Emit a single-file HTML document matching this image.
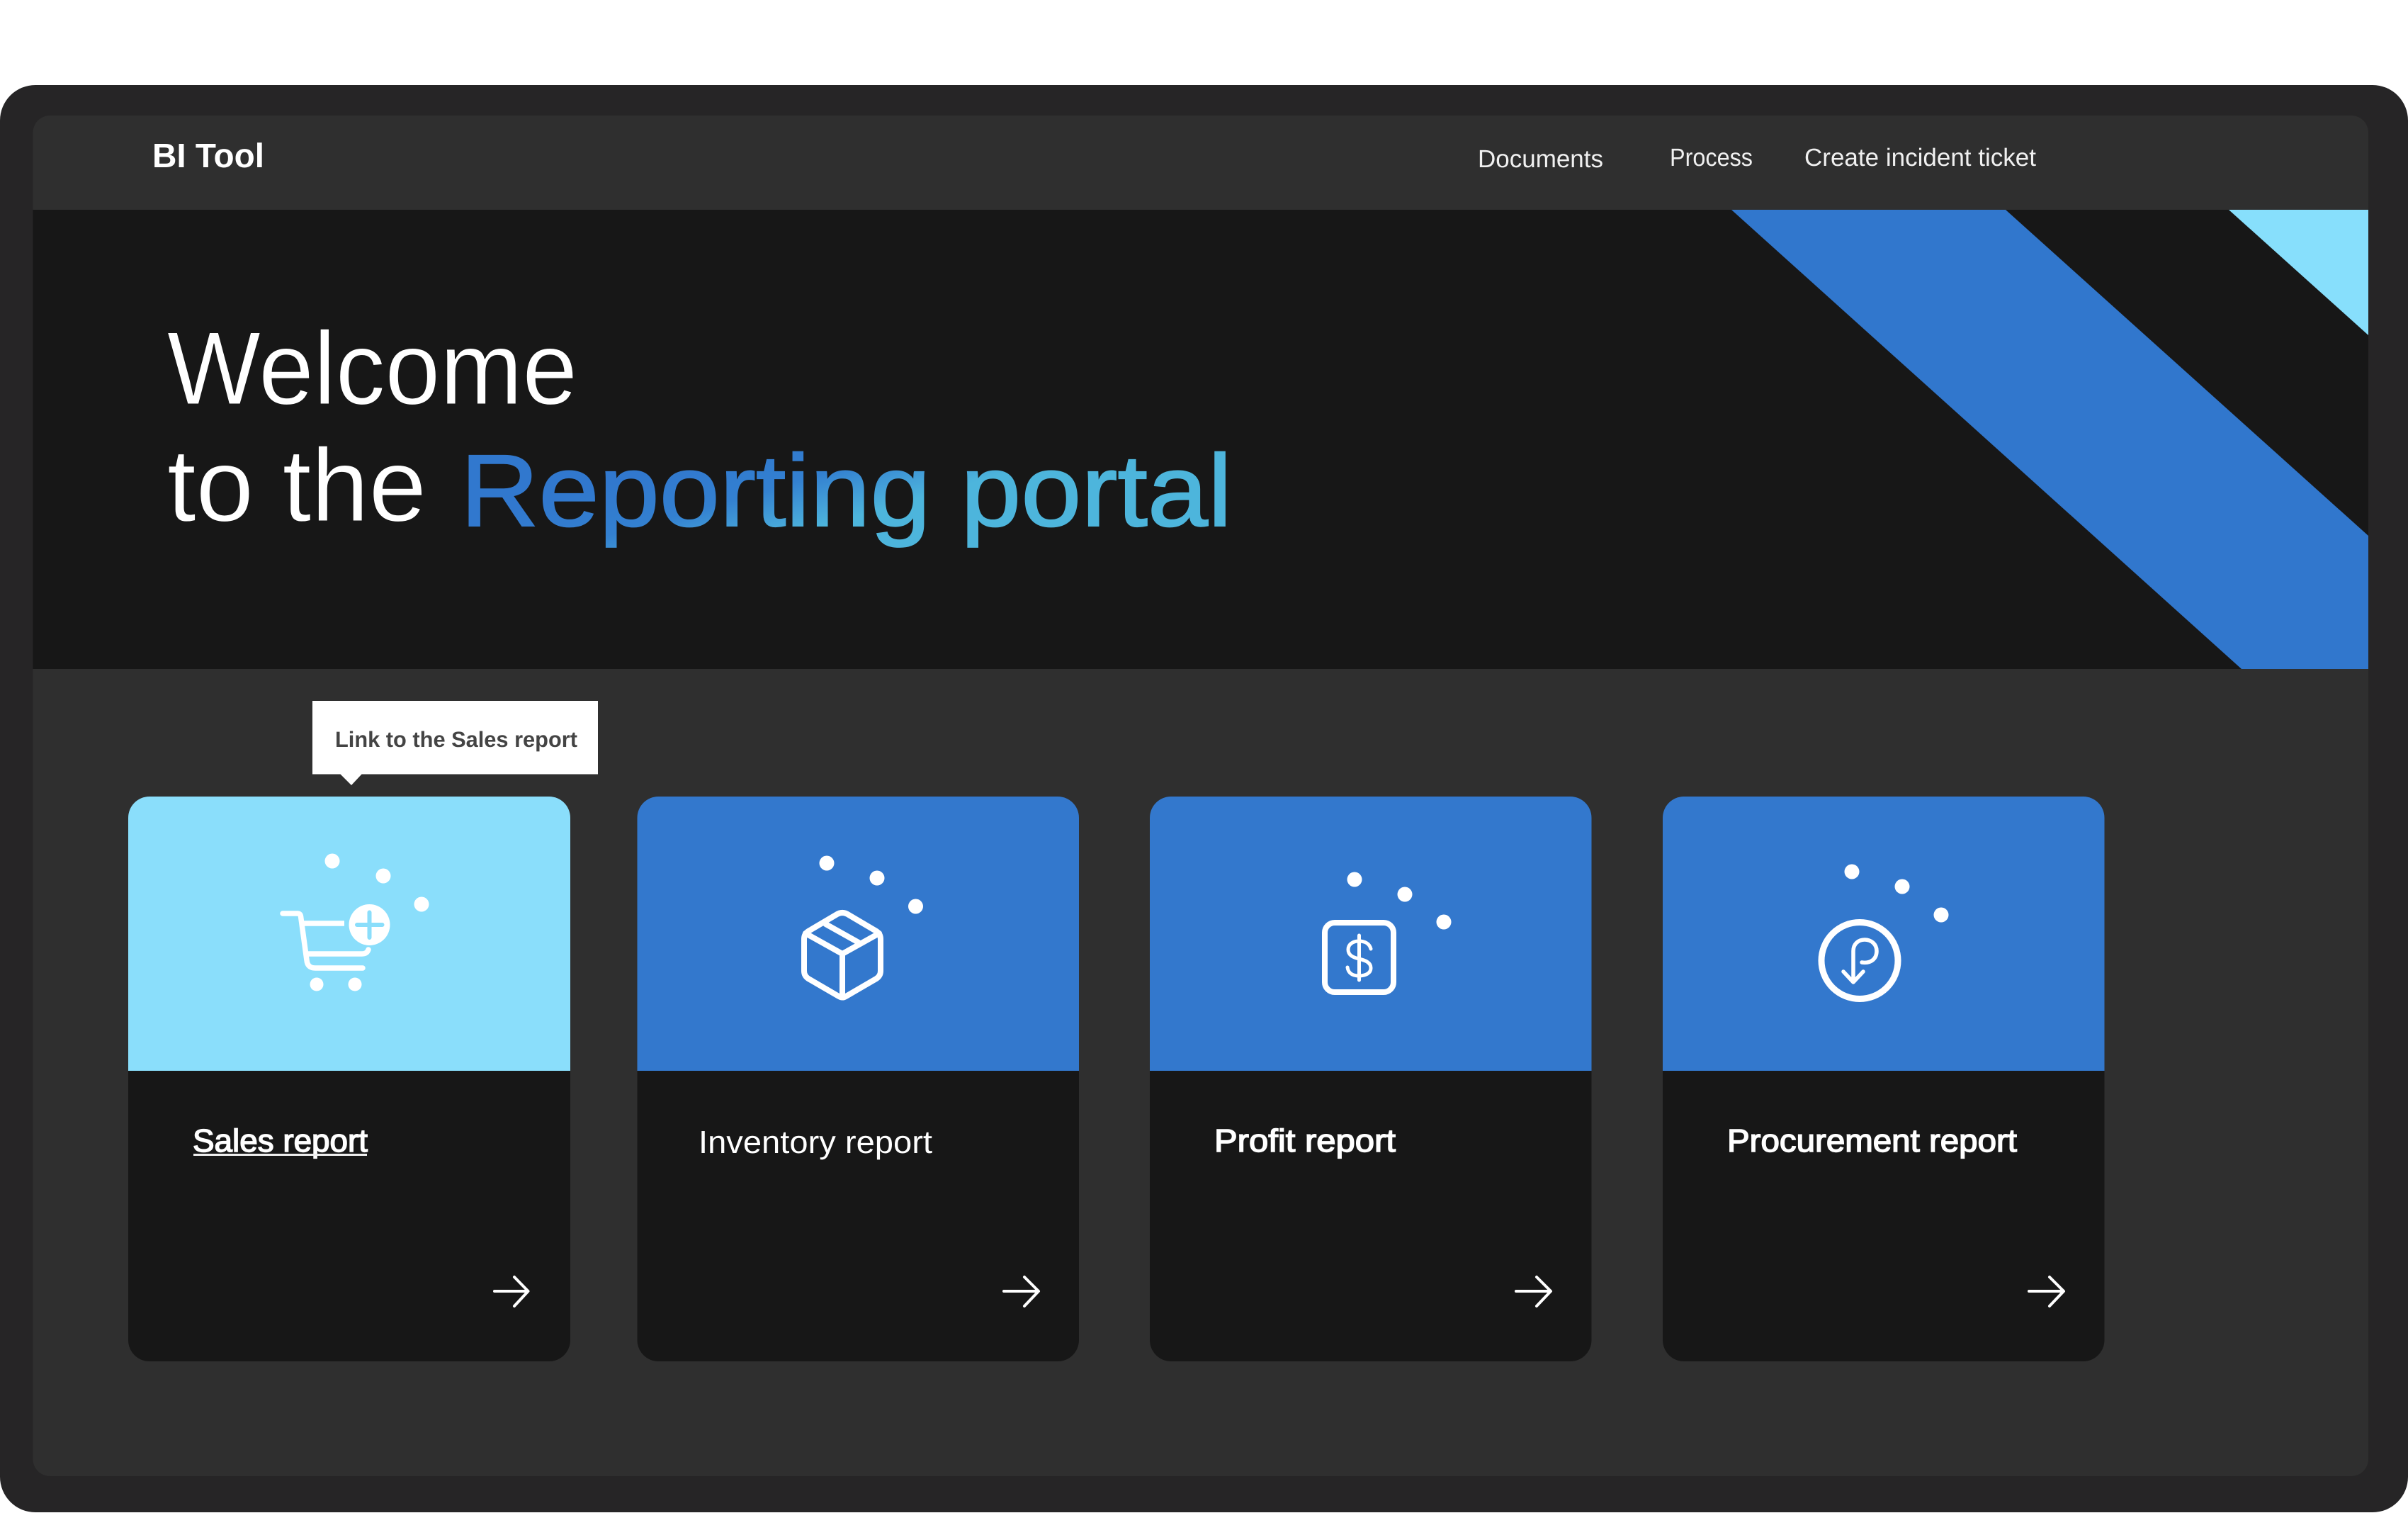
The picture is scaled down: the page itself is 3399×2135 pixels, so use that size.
<!DOCTYPE html>
<html lang="en">
<head>
<meta charset="utf-8">
<title>BI Tool - Reporting portal</title>
<style>
html,body{margin:0;padding:0;background:#fff;width:3399px;height:2135px;overflow:hidden}
svg{display:block}
text{font-family:"Liberation Sans",sans-serif;text-rendering:geometricPrecision}
</style>
</head>
<body>
<svg width="3399" height="2135" viewBox="0 0 3399 2135" xmlns="http://www.w3.org/2000/svg">
<defs>
<linearGradient id="g" gradientUnits="userSpaceOnUse" x1="1000" y1="640" x2="1040" y2="778">
<stop offset="0" stop-color="#3178ce"/><stop offset=".5" stop-color="#3380d0"/><stop offset=".8" stop-color="#44a0d8"/><stop offset="1" stop-color="#4db5dc"/>
</linearGradient>
</defs>
<rect width="3399" height="2135" fill="#fff"/>
<rect x="0" y="120" width="3399" height="2014" rx="50" fill="#262526"/>
<rect x="46.5" y="163" width="3296.5" height="1920" rx="24" fill="#2f2f2f"/>
<rect x="46.5" y="296" width="3296.5" height="648" fill="#171717"/>
<polygon points="2444,296 2831,296 3343,756 3343,944 3164,944" fill="#3177cd"/>
<polygon points="3146,296 3343,296 3343,473" fill="#87dffc"/>

<text x="215" y="236" font-size="48" font-weight="700" fill="#fff" textLength="158" lengthAdjust="spacingAndGlyphs">BI Tool</text>
<text x="2086" y="236" font-size="35" fill="#f0f0f0" textLength="177" lengthAdjust="spacingAndGlyphs">Documents</text>
<text x="2357" y="234" font-size="35" fill="#f0f0f0" textLength="117" lengthAdjust="spacingAndGlyphs">Process</text>
<text x="2547" y="234" font-size="35" fill="#f0f0f0" textLength="327" lengthAdjust="spacingAndGlyphs">Create incident ticket</text>

<g font-size="146" fill="#fff" stroke="#171717" stroke-width="1">
<text x="236" y="570" textLength="579" lengthAdjust="spacingAndGlyphs">Welcome</text>
<text x="236" y="735" textLength="366" lengthAdjust="spacingAndGlyphs">to the</text>
</g>
<text x="650" y="742" font-size="144" fill="url(#g)" stroke="url(#g)" stroke-width="2" textLength="1089" lengthAdjust="spacingAndGlyphs">Reporting portal</text>

<!-- tooltip -->
<rect x="441" y="989" width="403" height="103.500" fill="#fff"/>
<polygon points="480,1092 511,1092 496,1108" fill="#fff"/>
<text x="473" y="1054" font-size="31" font-weight="700" fill="#444" textLength="342" lengthAdjust="spacingAndGlyphs">Link to the Sales report</text>

<!-- cards dark -->
<g fill="#171717">
<path d="M181 1511H805V1891A30 30 0 0 1 775 1921H211A30 30 0 0 1 181 1891Z"/>
<path d="M899.500 1511H1523V1891A30 30 0 0 1 1493 1921H929.500A30 30 0 0 1 899.500 1891Z"/>
<path d="M1623 1511H2246.500V1891A30 30 0 0 1 2216.500 1921H1653A30 30 0 0 1 1623 1891Z"/>
<path d="M2347 1511H2970.500V1891A30 30 0 0 1 2940.500 1921H2377A30 30 0 0 1 2347 1891Z"/>
</g>
<!-- cards top -->
<path d="M181 1511V1154A30 30 0 0 1 211 1124H775A30 30 0 0 1 805 1154V1511Z" fill="#8adefb"/>
<g fill="#3378cd">
<path d="M899.500 1511V1154A30 30 0 0 1 929.500 1124H1493A30 30 0 0 1 1523 1154V1511Z"/>
<path d="M1623 1511V1154A30 30 0 0 1 1653 1124H2216.500A30 30 0 0 1 2246.500 1154V1511Z"/>
<path d="M2347 1511V1154A30 30 0 0 1 2377 1124H2940.500A30 30 0 0 1 2970.500 1154V1511Z"/>
</g>

<!-- dots -->
<g fill="#fff">
<circle cx="469" cy="1215" r="10.500"/><circle cx="541" cy="1236" r="10.500"/><circle cx="595" cy="1276" r="10.500"/>
<circle cx="1167" cy="1218" r="10.500"/><circle cx="1238" cy="1239" r="10.500"/><circle cx="1292.500" cy="1279" r="10.500"/>
<circle cx="1912" cy="1241" r="10.500"/><circle cx="1983" cy="1262" r="10.500"/><circle cx="2038" cy="1301" r="10.500"/>
<circle cx="2614" cy="1230" r="10.500"/><circle cx="2685" cy="1251" r="10.500"/><circle cx="2740" cy="1291" r="10.500"/>
</g>

<!-- cart -->
<g fill="none" stroke="#fff" stroke-width="7.500" stroke-linecap="round" stroke-linejoin="round">
<path d="M399 1289H420Q424 1289 424.500 1293L433 1355Q434 1366 445 1366H512"/>
<path d="M428 1303H486" stroke-linecap="butt"/>
<path d="M433 1346H511Q518 1346 520 1340"/>
</g>
<circle cx="447" cy="1389" r="9.500" fill="#fff"/><circle cx="501" cy="1389" r="9.500" fill="#fff"/>
<circle cx="521.500" cy="1305" r="29" fill="#fff"/>
<path d="M504 1305H539.500M521.500 1287.500V1323" stroke="#8adefb" stroke-width="6" stroke-linecap="round"/>

<!-- box -->
<g fill="none" stroke="#fff" stroke-width="8" stroke-linecap="round" stroke-linejoin="round">
<path d="M1180 1291Q1189 1285 1198 1291L1237 1314Q1243 1318 1243 1325V1370Q1243 1377 1237 1381L1194 1406Q1189 1409 1184 1406L1141 1381Q1135 1377 1135 1370V1325Q1135 1318 1141 1314Z"/>
<path d="M1137 1317L1189 1346L1241 1317M1189 1346V1406M1165.500 1304L1212 1330"/>
</g>

<!-- dollar -->
<g fill="none" stroke="#fff" stroke-linecap="round">
<rect x="1870" y="1302" width="97" height="98" rx="14" stroke-width="8"/>
<path stroke-width="5" d="M1935 1339C1933 1331 1926 1328 1918 1328C1909 1328 1903 1333 1903 1340C1903 1348 1910 1351 1918 1353C1927 1355 1935 1358 1935 1366C1935 1373 1928 1377 1918 1377C1909 1377 1903 1373 1902 1365M1918.500 1320V1383"/>
</g>

<!-- procurement -->
<g fill="none" stroke="#fff" stroke-linecap="round" stroke-linejoin="round">
<circle cx="2625" cy="1355.500" r="54" stroke-width="9"/>
<path stroke-width="5.500" d="M2628 1358C2642 1360 2649 1352 2649 1342C2649 1332 2641 1326 2632 1326C2623 1326 2616 1332 2616 1342V1385M2602 1371L2616 1386L2630 1371"/>
</g>

<!-- titles -->
<text x="272" y="1625" font-size="45" fill="#fff" stroke="#fff" stroke-width="1.500" textLength="247" lengthAdjust="spacingAndGlyphs">Sales report</text>
<rect x="273" y="1628" width="245" height="3" fill="#eee"/>
<text x="986" y="1627" font-size="45" fill="#fff" textLength="330" lengthAdjust="spacingAndGlyphs">Inventory report</text>
<text x="1714" y="1625" font-size="45" fill="#fff" stroke="#fff" stroke-width="1.500" textLength="256" lengthAdjust="spacingAndGlyphs">Profit report</text>
<text x="2438" y="1625" font-size="45" fill="#fff" stroke="#fff" stroke-width="1.500" textLength="409" lengthAdjust="spacingAndGlyphs">Procurement report</text>

<!-- arrows -->
<g fill="none" stroke="#fff" stroke-width="4" stroke-linecap="round" stroke-linejoin="round">
<path d="M698 1822H745M726 1802L745.500 1822L726 1843"/>
<path d="M1417 1822H1465M1446 1802L1466 1822L1446 1843"/>
<path d="M2140 1822H2188M2169 1802L2189 1822L2169 1843"/>
<path d="M2864 1822H2912M2893 1802L2913 1822L2893 1843"/>
</g>
</svg>
</body>
</html>
